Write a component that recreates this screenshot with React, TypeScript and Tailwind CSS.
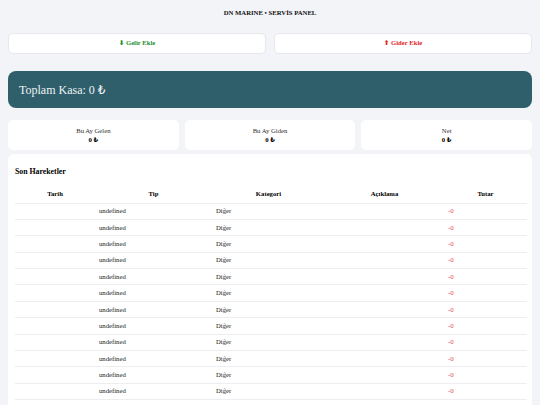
const rows = Array.from({ length: 12 });

export default function App() {
  return (
    <div className="min-h-[405px] bg-[#f3f4f8] px-2 pb-[6px] font-['Liberation_Serif','DejaVu_Sans',serif] text-[#111]">
      {/* başlık */}
      <div className="pt-[9px] text-center text-[6.7px] font-bold leading-[7px]">DN MARINE • SERVİS PANEL</div>

      {/* butonlar */}
      <div className="mt-[17px] grid grid-cols-2 gap-2">
        <button className="h-[21px] rounded-[5px] border border-[#e6e8ee] bg-white text-[6.7px] font-bold text-[#23902f]">
          ⬇ Gelir Ekle
        </button>
        <button className="h-[21px] rounded-[5px] border border-[#e6e8ee] bg-white text-[6.7px] font-bold text-[#e3262b]">
          ⬆ Gider Ekle
        </button>
      </div>

      {/* toplam kasa */}
      <div className="mt-[17px] flex h-[37px] items-center rounded-[8px] bg-[#2e5f6b] pl-[11px] text-[12px] text-[#eef3f4]">
        Toplam Kasa: 0 ₺
      </div>

      {/* özet */}
      <div className="mt-[12px] grid grid-cols-3 gap-[6px]">
        {['Bu Ay Gelen', 'Bu Ay Giden', 'Net'].map(t => (
          <div key={t} className="flex h-[30px] flex-col items-center justify-center rounded-[5px] bg-white text-[6.7px] leading-[9px]">
            <div className="text-[#333]">{t}</div>
            <div className="font-bold text-black">0 ₺</div>
          </div>
        ))}
      </div>

      {/* son hareketler */}
      <div className="mt-[4px] rounded-[6px] bg-white px-[7px] pt-[13px] pb-[10px]">
        <div className="text-[7.8px] font-bold leading-[10px] text-black">Son Hareketler</div>
        <table className="mt-[9px] w-full table-fixed border-collapse text-[6.7px]">
          <colgroup>
            <col className="w-[80px]" />
            <col className="w-[117px]" />
            <col className="w-[113px]" />
            <col className="w-[119px]" />
            <col className="w-[83px]" />
          </colgroup>
          <thead>
            <tr className="h-[17px] border-b border-[#eceef2] text-black">
              <th className="font-bold">Tarih</th>
              <th className="font-bold">Tip</th>
              <th className="font-bold">Kategori</th>
              <th className="font-bold">Açıklama</th>
              <th className="font-bold">Tutar</th>
            </tr>
          </thead>
          <tbody>
            {rows.map((_, i) => (
              <tr key={i} className="h-[16.4px] border-b border-[#eceef2]">
                <td className="px-[4px]"></td>
                <td className="px-[4px] text-[#222]">undefined</td>
                <td className="px-[4px] text-[#222]">Diğer</td>
                <td className="px-[4px]"></td>
                <td className="px-[4px] text-[#e5484d]">-0</td>
              </tr>
            ))}
          </tbody>
        </table>
      </div>
    </div>
  );
}
